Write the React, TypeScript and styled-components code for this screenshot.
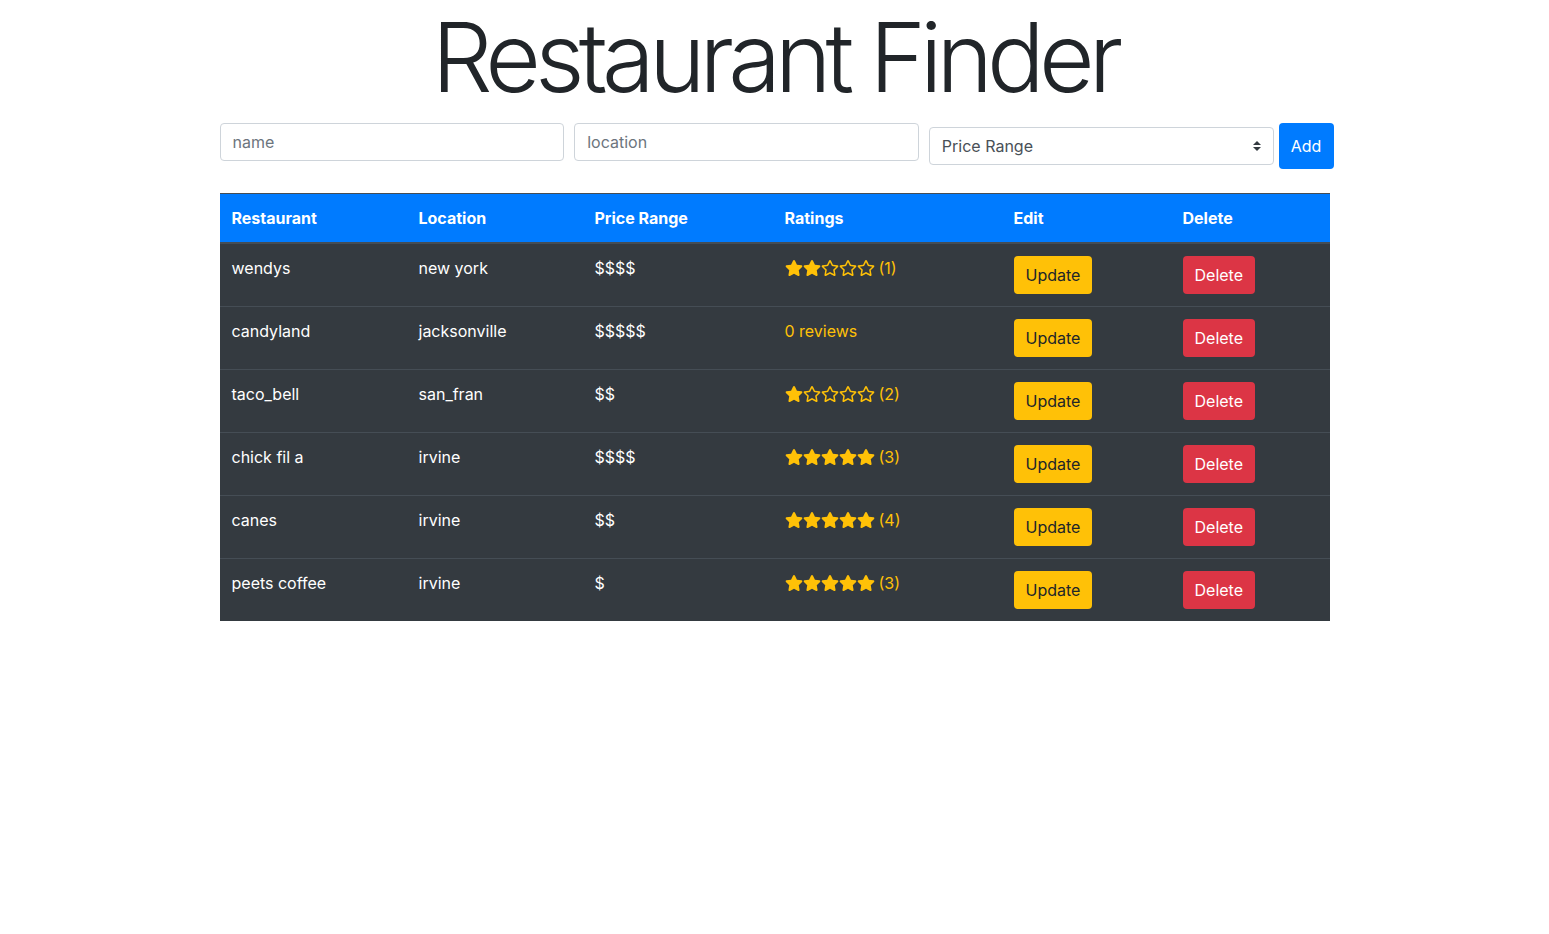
import * as React from "react";
import styled, { createGlobalStyle } from "styled-components";
import { FaStar, FaRegStar } from "react-icons/fa";

const GlobalStyle = createGlobalStyle`
  body {
    margin: 0;
    font-family: Inter, "Noto Sans", "Liberation Sans", sans-serif;
    font-size: 16px;
    line-height: 1.5;
    color: #212529;
    background: #fff;
  }
`;

const Container = styled.div`
  width: 1110px;
  margin: 0 auto;
`;

const Title = styled.h1`
  margin: 0 0 8px;
  font-size: 96px;
  font-weight: 300;
  line-height: 1.2;
  text-align: center;
  letter-spacing: -5.9px;
`;

const FormRow = styled.form`
  display: flex;
  align-items: flex-start;
  gap: 10px;
  margin: 0 -4px 24px 0;
`;

const Field = styled.input`
  flex: 1;
  min-width: 0;
  height: 38px;
  box-sizing: border-box;
  padding: 6px 12px;
  border: 1px solid #ced4da;
  border-radius: 4px;
  font: inherit;
  color: #495057;

  &::placeholder {
    color: #6c757d;
  }
`;

const SelectBox = styled.div`
  flex: 1;
  position: relative;
  height: 38px;
  margin-top: 4px;
  box-sizing: border-box;
  padding: 6px 12px;
  border: 1px solid #ced4da;
  border-radius: 4px;
  color: #495057;
`;

const SelectArrows = styled.svg`
  position: absolute;
  right: 12px;
  top: 13px;
`;

const AddButton = styled.button`
  margin-left: -5px;
  width: 55px;
  height: 46px;
  border: none;
  border-radius: 4px;
  background: #007bff;
  color: #fff;
  font: inherit;
`;

const Table = styled.table`
  width: 100%;
  table-layout: fixed;
  border-collapse: collapse;
  background: #343a40;
  color: #fff;
`;

const HeadCell = styled.th<{ $w: number }>`
  width: ${(p) => p.$w}px;
  box-sizing: border-box;
  padding: 12px;
  text-align: left;
  font-weight: 700;
  background: #007bff;
  border-top: 1px solid #454d55;
  border-bottom: 2px solid #454d55;
`;

const Row = styled.tr`
  & + & td {
    border-top: 1px solid #454d55;
  }
`;

const Cell = styled.td`
  padding: 12px;
  vertical-align: top;
  white-space: nowrap;
`;

const Rating = styled.span`
  display: inline-flex;
  align-items: center;
  color: #ffc107;

  svg {
    width: 18px;
    height: 16px;
  }
`;

const Count = styled.span`
  margin-left: 4px;
`;

const Button = styled.button<{ $variant: "warning" | "danger" }>`
  height: 38px;
  padding: 6px 12px;
  border: none;
  border-radius: 4px;
  font: inherit;
  background: ${(p) => (p.$variant === "warning" ? "#ffc107" : "#dc3545")};
  color: ${(p) => (p.$variant === "warning" ? "#212529" : "#fff")};
`;

const restaurants = [
  { name: "wendys", location: "new york", price: 4, stars: 2, count: 1 },
  { name: "candyland", location: "jacksonville", price: 5, stars: 0, count: 0 },
  { name: "taco_bell", location: "san_fran", price: 2, stars: 1, count: 2 },
  { name: "chick fil a", location: "irvine", price: 4, stars: 5, count: 3 },
  { name: "canes", location: "irvine", price: 2, stars: 5, count: 4 },
  { name: "peets coffee", location: "irvine", price: 1, stars: 5, count: 3 },
];

const StarRating: React.FC<{ stars: number; count: number }> = ({ stars, count }) => {
  if (count === 0) return <Rating>0 reviews</Rating>;
  return (
    <Rating>
      {[0, 1, 2, 3, 4].map((i) => (i < stars ? <FaStar key={i} /> : <FaRegStar key={i} />))}
      <Count>({count})</Count>
    </Rating>
  );
};

const App: React.FC = () => {
  return (
    <Container>
      <GlobalStyle />
      <Title>Restaurant Finder</Title>
      <FormRow>
        <Field placeholder="name" />
        <Field placeholder="location" />
        <SelectBox>
          Price Range
          <SelectArrows width="8" height="10" viewBox="0 0 4 5">
            <path fill="#343a40" d="M2 0L0 2h4zm0 5L0 3h4z" />
          </SelectArrows>
        </SelectBox>
        <AddButton type="button">Add</AddButton>
      </FormRow>
      <Table>
        <thead>
          <tr>
            <HeadCell $w={187}>Restaurant</HeadCell>
            <HeadCell $w={176}>Location</HeadCell>
            <HeadCell $w={190}>Price Range</HeadCell>
            <HeadCell $w={229}>Ratings</HeadCell>
            <HeadCell $w={169}>Edit</HeadCell>
            <HeadCell $w={159}>Delete</HeadCell>
          </tr>
        </thead>
        <tbody>
          {restaurants.map((r) => (
            <Row key={r.name}>
              <Cell>{r.name}</Cell>
              <Cell>{r.location}</Cell>
              <Cell>{"$".repeat(r.price)}</Cell>
              <Cell>
                <StarRating stars={r.stars} count={r.count} />
              </Cell>
              <Cell>
                <Button $variant="warning">Update</Button>
              </Cell>
              <Cell>
                <Button $variant="danger">Delete</Button>
              </Cell>
            </Row>
          ))}
        </tbody>
      </Table>
    </Container>
  );
};

export default App;
